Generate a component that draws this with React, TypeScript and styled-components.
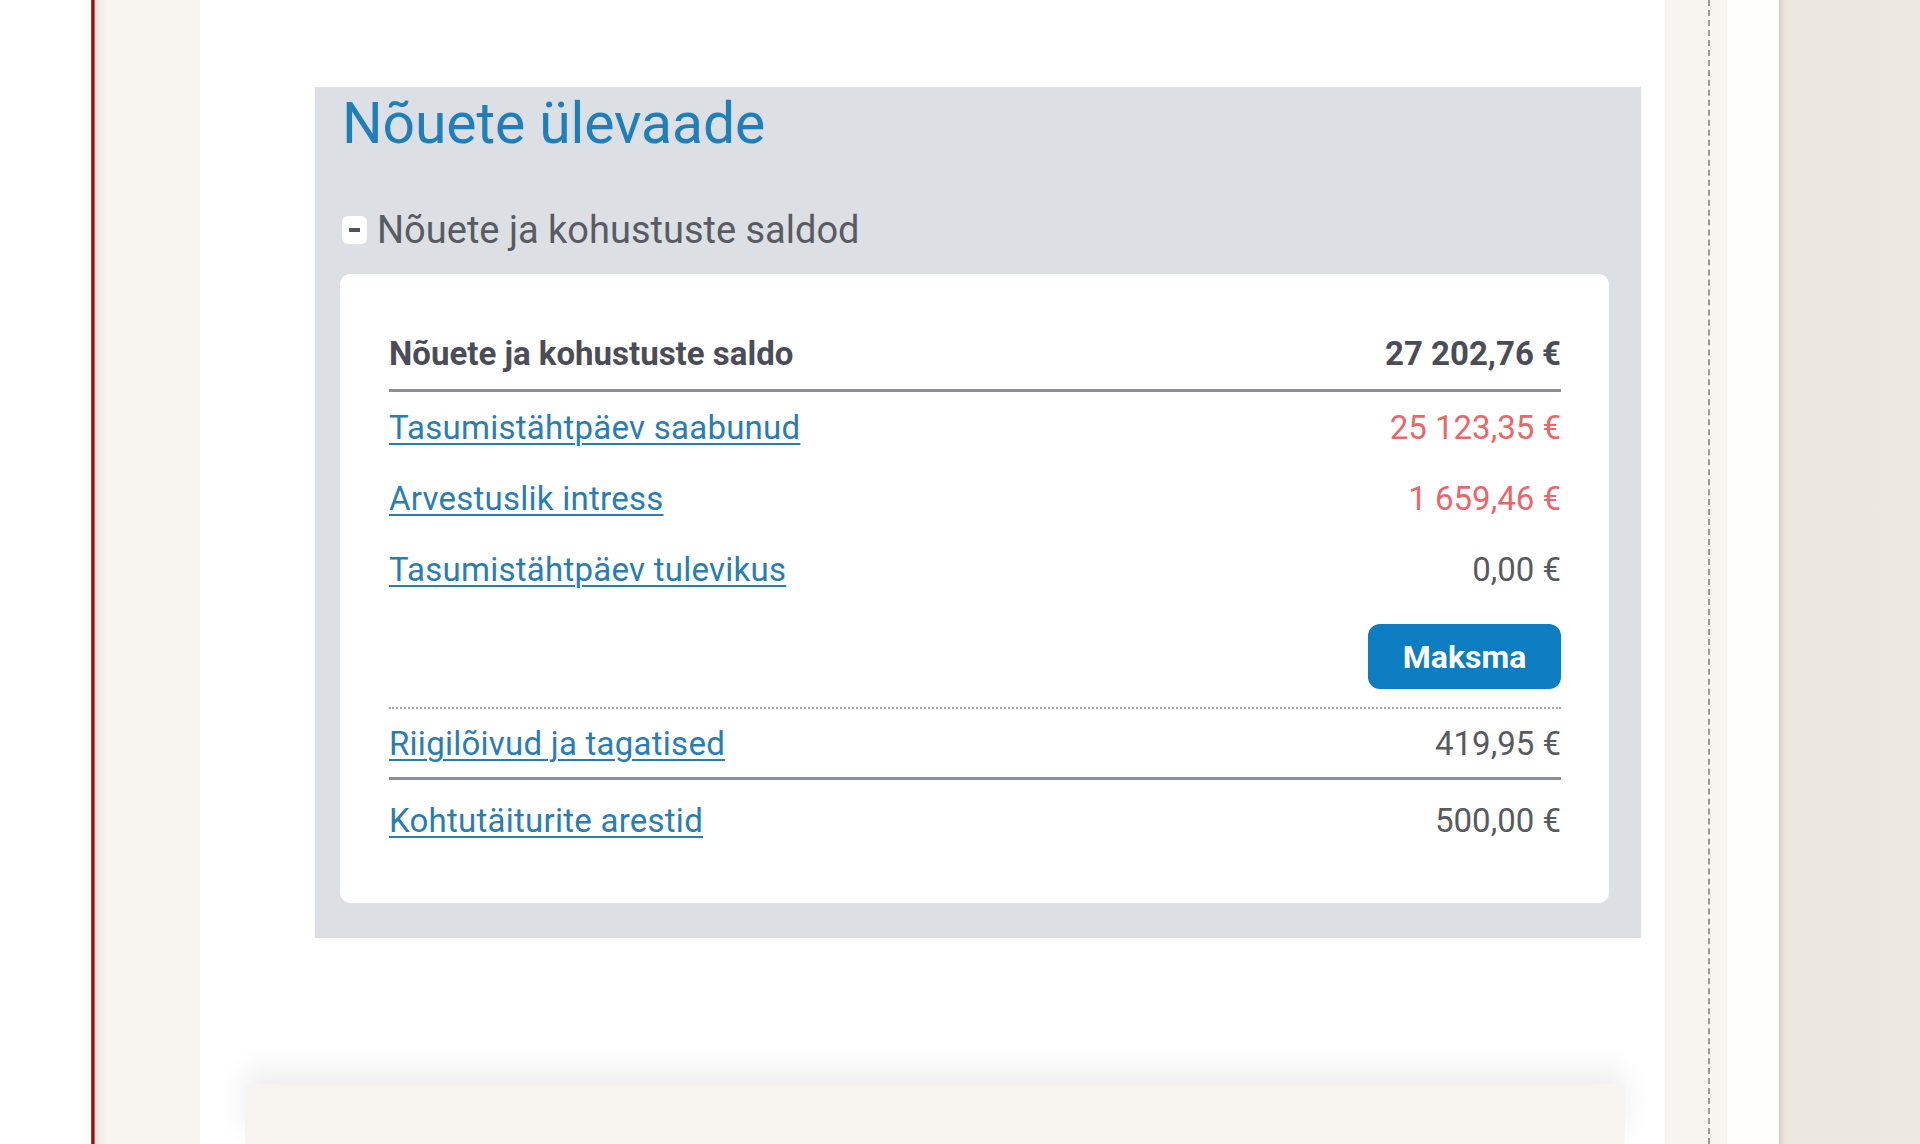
import React from "react";
import styled, { createGlobalStyle } from "styled-components";

const Global = createGlobalStyle`
  html, body { margin: 0; padding: 0; background: #ffffff; }
  body { font-family: Roboto, "Liberation Sans", Arial, sans-serif; overflow: hidden; }
`;

const Page = styled.div`
  display: grid;
  grid-template-columns: 91px 4px 105px 1465px 62px 52px 1fr;
  height: 1144px;
  overflow: hidden;
  background: #ffffff;
`;

const Blank = styled.div`
  background: #ffffff;
`;

const RedRule = styled.div`
  background: linear-gradient(90deg, #c96a6a 0px, #9c0a0a 1px, #a30c0c 3px, #d8b0a8 4px);
`;

const LeftGutter = styled.div`
  background: linear-gradient(90deg, #e4e0d8 0px, #f1f0ea 6px, #f6f5ef 14px, #f6f5ef 100%);
`;

const Main = styled.main`
  display: flex;
  flex-direction: column;
  padding-top: 87px;
  background: #ffffff;
`;

const Panel = styled.section`
  margin-left: 115px;
  width: 1326px;
  box-sizing: border-box;
  background: #dcdfe3;
  padding: 4px 32px 35px 25px;
`;

const Title = styled.h1`
  margin: 0 0 0 2px;
  font-family: Roboto, "Liberation Sans", sans-serif;
  font-weight: 400;
  font-size: 57px;
  line-height: 66px;
  color: #1f7fb8;
  letter-spacing: -0.1px;
`;

const SectionHeader = styled.div`
  display: flex;
  align-items: center;
  gap: 10px;
  margin: 43px 0 0 2px;
  height: 60px;
`;

const Toggle = styled.span`
  display: inline-flex;
  align-items: center;
  justify-content: center;
  width: 25px;
  height: 28px;
  border-radius: 6px;
  background: #ffffff;
  &::before {
    content: "";
    display: block;
    width: 11px;
    height: 4px;
    background: #4f525a;
  }
`;

const SectionTitle = styled.h2`
  margin: 0;
  font-weight: 400;
  font-size: 38px;
  line-height: 44px;
  color: #585b63;
`;

const Card = styled.div`
  margin-top: 14px;
  background: #ffffff;
  border-radius: 10px;
  padding: 44px 48px 46px 49px;
`;

const Row = styled.div<{ $divider?: "solid" | "none"; $h?: number; $padTop?: number }>`
  display: flex;
  justify-content: space-between;
  align-items: center;
  height: ${(p) => p.$h ?? 71}px;
  padding-top: ${(p) => p.$padTop ?? 0}px;
  box-sizing: border-box;
  border-bottom: ${(p) => (p.$divider === "solid" ? "3px solid #8b8e97" : "none")};
  font-size: 33px;
`;

const Label = styled.span<{ $strong?: boolean }>`
  color: #4b4d56;
  font-weight: ${(p) => (p.$strong ? 700 : 400)};
`;

const Link = styled.a`
  color: #2a7db1;
  letter-spacing: 0.25px;
  text-decoration: underline;
  text-decoration-thickness: 2px;
  text-underline-offset: 4px;
  cursor: pointer;
`;

const Amount = styled.span<{ $tone?: "strong" | "due" | "plain" }>`
  color: ${(p) => (p.$tone === "strong" ? "#4b4d56" : p.$tone === "due" ? "#e8676a" : "#585a60")};
  font-weight: ${(p) => (p.$tone === "strong" ? 700 : 400)};
`;

const ActionRow = styled.div`
  display: flex;
  justify-content: flex-end;
  padding: 19px 0 18px;
  border-bottom: 2px dotted #a6a6a6;
`;

const PayButton = styled.button`
  width: 193px;
  height: 65px;
  border: none;
  border-radius: 12px;
  background: #0c7dc0;
  color: #ffffff;
  font-family: Roboto, "Liberation Sans", sans-serif;
  font-weight: 700;
  font-size: 32px;
  cursor: pointer;
`;

const Footer = styled.div`
  margin: 146px 0 0 45px;
  width: 1380px;
  flex: 1;
  background: #f6f5ef;
  box-shadow: 0 -14px 28px rgba(0, 0, 0, 0.07);
`;

const RightStrip = styled.div`
  background: #f6f5ef;
  display: flex;
  justify-content: flex-end;
  padding-right: 17px;
`;

const DashedRule = styled.div`
  width: 0;
  border-left: 2px dashed #9a9a94;
  height: 100%;
`;

const RightWhite = styled.div`
  background: #fefefb;
`;

const RightShade = styled.div`
  background: linear-gradient(90deg, #cfcbc3 0px, #e3dfd8 3px, #ece8e1 8px, #ede9e2 100%);
`;

const rows = [
  { label: "Tasumistähtpäev saabunud", amount: "25 123,35 €", tone: "due" as const },
  { label: "Arvestuslik intress", amount: "1 659,46 €", tone: "due" as const },
  { label: "Tasumistähtpäev tulevikus", amount: "0,00 €", tone: "plain" as const },
];

export default function App() {
  return (
    <>
      <Global />
      <Page>
        <Blank />
        <RedRule />
        <LeftGutter />
        <Main>
          <Panel>
            <Title>Nõuete ülevaade</Title>
            <SectionHeader>
              <Toggle />
              <SectionTitle>Nõuete ja kohustuste saldod</SectionTitle>
            </SectionHeader>
            <Card>
              <Row $divider="solid" $h={74}>
                <Label $strong>Nõuete ja kohustuste saldo</Label>
                <Amount $tone="strong">27 202,76 €</Amount>
              </Row>
              {rows.map((r) => (
                <Row key={r.label}>
                  <Link>{r.label}</Link>
                  <Amount $tone={r.tone}>{r.amount}</Amount>
                </Row>
              ))}
              <ActionRow>
                <PayButton>Maksma</PayButton>
              </ActionRow>
              <Row $divider="solid" $h={71}>
                <Link>Riigilõivud ja tagatised</Link>
                <Amount>419,95 €</Amount>
              </Row>
              <Row $h={77} $padTop={4}>
                <Link>Kohtutäiturite arestid</Link>
                <Amount>500,00 €</Amount>
              </Row>
            </Card>
          </Panel>
          <Footer />
        </Main>
        <RightStrip>
          <DashedRule />
        </RightStrip>
        <RightWhite />
        <RightShade />
      </Page>
    </>
  );
}
